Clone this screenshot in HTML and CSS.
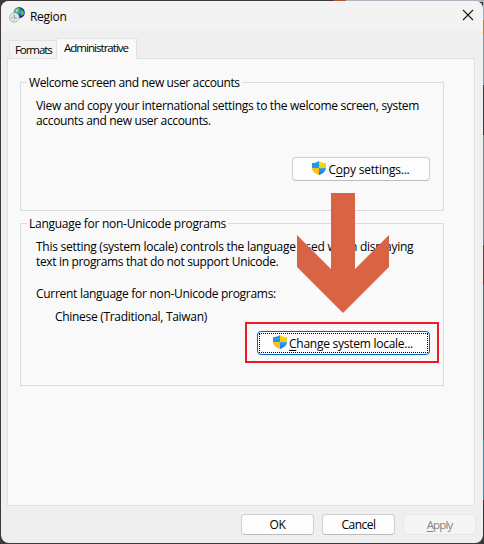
FILE: index.html
```
<!DOCTYPE html>
<html lang="en">
<head>
<meta charset="utf-8">
<title>Region</title>
<link rel="stylesheet" href="styles.css">
</head>
<body>
<svg width="0" height="0" class="defs" aria-hidden="true">
  <defs>
    <clipPath id="shield-clip"><path d="M7 0C5 1.500 2.500 2 0 2V6.500C0 10.500 3 12.700 7 14C11 12.700 14 10.500 14 6.500V2C11.500 2 9 1.500 7 0Z"/></clipPath>
    <linearGradient id="shield-blue" x2="0" y2="1"><stop offset="0" stop-color="#32a8ea"/><stop offset="1" stop-color="#1478cd"/></linearGradient>
    <linearGradient id="shield-gold" x2="0" y2="1"><stop offset="0" stop-color="#ffdc0a"/><stop offset="1" stop-color="#fbc80c"/></linearGradient>
    <symbol id="shield" viewBox="0 0 14 14">
      <g clip-path="url(#shield-clip)">
        <path fill="#1e9be4" d="M0 0H7V7H0Z"/><path fill="url(#shield-gold)" d="M7 0H14V7H7Z"/>
        <path fill="#f9c01a" d="M0 7H7V14H0Z"/><path fill="url(#shield-blue)" d="M7 7H14V14H7Z"/>
      </g>
    </symbol>
    <radialGradient id="globe" cx=".4" cy=".4"><stop offset="0" stop-color="#58b7f0"/><stop offset=".6" stop-color="#2462c7"/><stop offset="1" stop-color="#152f87"/></radialGradient>
  </defs>
</svg>
<div class="window">
  <header class="titlebar">
    <svg class="app-icon" width="16" height="16" viewBox="0 0 16 16">
      <circle cx="10.200" cy="5.600" r="5.600" fill="url(#globe)"/>
      <path fill="#62bd42" d="M6 2L9 .500L11 2L9.500 4L8 6L5 5ZM12 3L14.500 4L15 7L12.500 9L11.500 6Z"/>
      <path fill="#b4e2f9" d="M7 3L9 2L8.500 4L7 5Z"/>
      <circle cx="5.300" cy="10.500" r="4.800" fill="#e3e9ed" stroke="#a5b1b9" stroke-width=".9"/>
      <path d="M5.200 7.700V11H8M2.500 11H4M5.200 13V14" fill="none" stroke="#708392" stroke-width=".9"/>
    </svg>
    <h1 class="title">Region</h1>
    <svg class="close" width="10" height="10" viewBox="0 0 10 10"><path d="M0 0L10 10M10 0L0 10" stroke="#191919" stroke-width="1.100"/></svg>
  </header>
  <nav class="tabs">
    <div class="tab"><span>Formats</span></div>
    <div class="tab active"><span>Administrative</span></div>
  </nav>
  <main class="panel">
    <section class="group welcome">
      <h2 class="legend">Welcome screen and new user accounts</h2>
      <p class="text"><span class="line view">View and copy your international settings to the welcome screen, system</span><span class="line accounts">accounts and new user accounts.</span></p>
      <div class="button copy"><svg width="14" height="14"><use href="#shield"/></svg><span>C<u>o</u>py settings...</span></div>
    </section>
    <section class="group language">
      <h2 class="legend">Language for non-Unicode programs</h2>
      <p class="text"><span class="line this">This setting (system locale) controls the language used when displaying</span><span class="line programs">text in programs that do not support Unicode.</span></p>
      <p class="current">Current language for non-Unicode programs:</p>
      <p class="value">Chinese (Traditional, Taiwan)</p>
      <div class="button change"><svg width="14" height="14"><use href="#shield"/></svg><span><u>C</u>hange system locale...</span></div>
    </section>
  </main>
  <footer class="actions">
    <div class="button ok">OK</div>
    <div class="button cancel">Cancel</div>
    <div class="button apply"><span><u>A</u>pply</span></div>
  </footer>
</div>
<div class="highlight"></div>
<svg class="arrow" width="92" height="120" viewBox="0 0 92 120"><path fill="#d96445" d="M34 0H58V76L92 42V74L46 120L0 74V42L34 76Z"/></svg>
</body>
</html>
```
FILE: styles.css
```
* { box-sizing: border-box; }
body {
  margin: 0;
  width: 484px;
  height: 544px;
  padding: 1px;
  overflow: hidden;
  position: relative;
  background:
    linear-gradient(90deg, #3c3a3c 0 10px, #b5562c 10px 22px, #aab5bf 22px) 100% 0 / 160px 2px no-repeat,
    linear-gradient(#9fb2c1 0 20px, #a98a45 20px 35px, #8298a7 35px 85px, #343c44 85px 135px, #71858f 135px 245px, #643b40 245px 285px, #526b78 285px 440px, #378da5 440px 500px, #333 500px) 100% 0 / 1px 544px no-repeat,
    #3c3a3c;
  color: #000;
  font: 12px/15px "Open Sans", "Noto Sans", sans-serif;
  letter-spacing: -.3px;
}
h1, h2, p { margin: 0; font: inherit; }
u { text-decoration-thickness: 1px; text-underline-offset: 2px; }
.defs { position: absolute; }
.window {
  width: 482px;
  height: 542px;
  display: flex;
  flex-direction: column;
  overflow: hidden;
  border-radius: 8px;
  background: #efefef;
}
.titlebar {
  flex: none;
  height: 30px;
  display: flex;
  align-items: center;
  padding: 0 10px 0 8px;
  background: #f3f3f3;
}
.app-icon { margin-top: -2px; }
.title { margin-left: 5px; }
.close { margin-left: auto; margin-top: -2px; overflow: visible; }
.tabs {
  flex: none;
  height: 27px;
  display: flex;
  align-items: flex-end;
  padding-left: 8px;
  position: relative;
}
.tab {
  width: 48px;
  height: 18px;
  padding: 1px 0 0 5px;
  border: 1px solid #e2e2e2;
  border-bottom: 0;
  background: #f3f3f3;
  font-size: 11.5px;
  letter-spacing: -1.08px;
  white-space: nowrap;
}
.tab.active {
  width: 81px;
  height: 21px;
  margin: 0 0 -1px -1px;
  padding: 1px 0 0 7px;
  background: #f9f9f9;
  letter-spacing: -.97px;
}
.panel {
  flex: none;
  width: 468px;
  height: 448px;
  margin-left: 6px;
  padding: 23px 30px 0 12px;
  border: 1px solid #e0e0e0;
  background: #f9f9f9;
  box-shadow: 2px 1px 0 #f3f3f3;
}
.group {
  display: flex;
  flex-direction: column;
  align-items: flex-start;
  width: 424px;
  border: 1px solid #dcdcdc;
  padding: 0 13px 0 15px;
}
.welcome { height: 129px; }
.language { height: 163px; margin-top: 12px; }
.legend {
  height: 15px;
  margin: -8px 0 0 -9px;
  padding: 0 2px;
  background: #f9f9f9;
  white-space: nowrap;
}
.welcome .legend { letter-spacing: -.37px; }
.language .legend { letter-spacing: -.27px; }
.line { display: block; white-space: nowrap; }
.text { margin-top: 8px; }
.view { letter-spacing: -.32px; }
.accounts, .programs { letter-spacing: -.34px; }
.this { letter-spacing: -.27px; }
.current { margin-top: 17px; letter-spacing: -.29px; }
.value { margin: 8px 0 0 19px; }
.button {
  display: flex;
  align-items: center;
  justify-content: center;
  border: 1px solid #d0d0d0;
  border-bottom-color: #bdbdbd;
  border-radius: 4px;
  background: #fdfdfd;
  white-space: nowrap;
}
.button svg { margin: -2px 2px 0 0; }
.copy {
  width: 138px;
  height: 24px;
  margin: 29px 0 0 auto;
  letter-spacing: -.2px;
}
.change {
  width: 173px;
  height: 24px;
  margin: 7px 0 0 auto;
  padding-right: 1px;
  border-color: #0067c0;
  position: relative;
  letter-spacing: -.26px;
}
.change::after {
  content: "";
  position: absolute;
  inset: 1px;
  border: 1px dotted #000;
}
.actions {
  display: flex;
  justify-content: flex-end;
  gap: 8px;
  padding: 8px 7px 0 0;
}
.actions .button { width: 73px; height: 21px; letter-spacing: -.5px; }
.actions .ok { letter-spacing: -.3px; }
.actions .apply {
  border-color: #e6e6e6;
  background: #f5f5f5;
  color: #838383;
  font-size: 11.5px;
  letter-spacing: -.9px;
}
.highlight {
  position: absolute;
  left: 245px;
  top: 322px;
  width: 194px;
  height: 41px;
  border: 2px solid #ed1c24;
}
.arrow { position: absolute; left: 297px; top: 193px; }
```
